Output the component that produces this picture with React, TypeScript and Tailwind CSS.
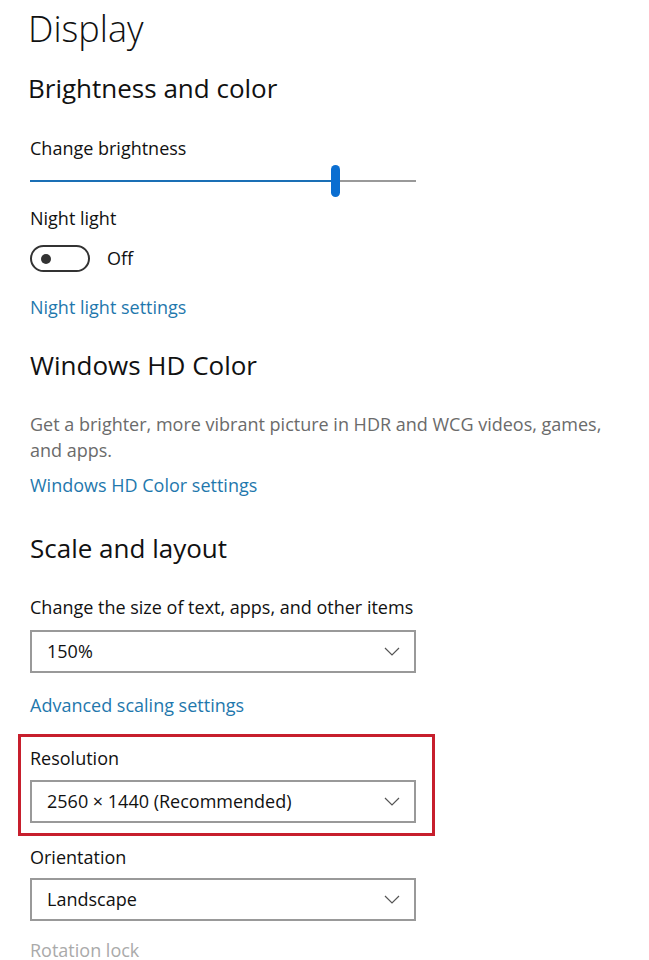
function Chevron() {
  return (
    <svg width="16" height="9" viewBox="0 0 16 9" fill="none" stroke="#555" strokeWidth="1.2">
      <path d="M1 1l7 7 7-7" />
    </svg>
  )
}

function Select({ value }: { value: string }) {
  return (
    <div className="flex h-[43px] w-[386px] items-center justify-between border-2 border-[#999] pl-[15px] pr-[14px] text-[18px] text-[#111]">
      <span>{value}</span>
      <Chevron />
    </div>
  )
}

function Label({ children, className = '' }: { children: React.ReactNode; className?: string }) {
  return <div className={`text-[18px] leading-[24px] text-[#111] ${className}`}>{children}</div>
}

function Link({ children, className = '' }: { children: React.ReactNode; className?: string }) {
  return <div className={`text-[18px] leading-[24px] text-[#1f78ad] ${className}`}>{children}</div>
}

export default function App() {
  return (
    <div
      className="h-[960px] w-[649px] overflow-hidden bg-white pl-[30px]"
      style={{ fontFamily: '"Open Sans", "Noto Sans", sans-serif' }}
    >
      <div className="-ml-[2px] pt-[5px] text-[36px] font-light leading-[48px] text-[#111]">Display</div>
      <div className="-ml-[2px] mt-[18px] text-[26px] leading-[34px] text-[#111]">Brightness and color</div>

      <Label className="mt-[31px]">Change brightness</Label>
      <div className="relative mt-[5px] flex h-[32px] w-[386px] items-center">
        <div className="h-[2px] w-[305px] bg-[#1a6fb5]" />
        <div className="h-[2px] flex-1 bg-[#999]" />
        <div className="absolute left-[301px] top-0 h-[32px] w-[9px] rounded-full bg-[#0a6ed1]" />
      </div>

      <Label className="mt-[9px]">Night light</Label>
      <div className="mt-[15px] flex items-center gap-[17px]">
        <div className="flex h-[27px] w-[60px] items-center rounded-full border-2 border-[#333] pl-[9px]">
          <div className="h-[10px] w-[10px] rounded-full bg-[#333]" />
        </div>
        <span className="text-[18px] text-[#111]">Off</span>
      </div>
      <Link className="mt-[23px]">Night light settings</Link>

      <div className="mt-[29px] text-[26px] leading-[34px] text-[#111]">Windows HD Color</div>
      <div className="mt-[29px] w-[600px] text-[18px] leading-[26px] text-[#6b6b6b]">
        Get a brighter, more vibrant picture in HDR and WCG videos, games, and apps.
      </div>
      <Link className="mt-[10px]">Windows HD Color settings</Link>

      <div className="mt-[34px] text-[26px] leading-[34px] text-[#111]">Scale and layout</div>
      <Label className="mt-[30px]">Change the size of text, apps, and other items</Label>
      <div className="mt-[11px]">
        <Select value="150%" />
      </div>
      <Link className="mt-[20px]">Advanced scaling settings</Link>

      <div className="-ml-[12px] mt-[17px] w-[417px] border-[3px] border-[#c71f2d] pb-[10px] pl-[9px] pt-[9px]">
        <Label>Resolution</Label>
        <div className="mt-[10px]">
          <Select value="2560 × 1440 (Recommended)" />
        </div>
      </div>

      <Label className="mt-[9px]">Orientation</Label>
      <div className="mt-[9px]">
        <Select value="Landscape" />
      </div>
      <div className="mt-[17px] text-[18px] leading-[24px] text-[#aaa]">Rotation lock</div>
    </div>
  )
}
